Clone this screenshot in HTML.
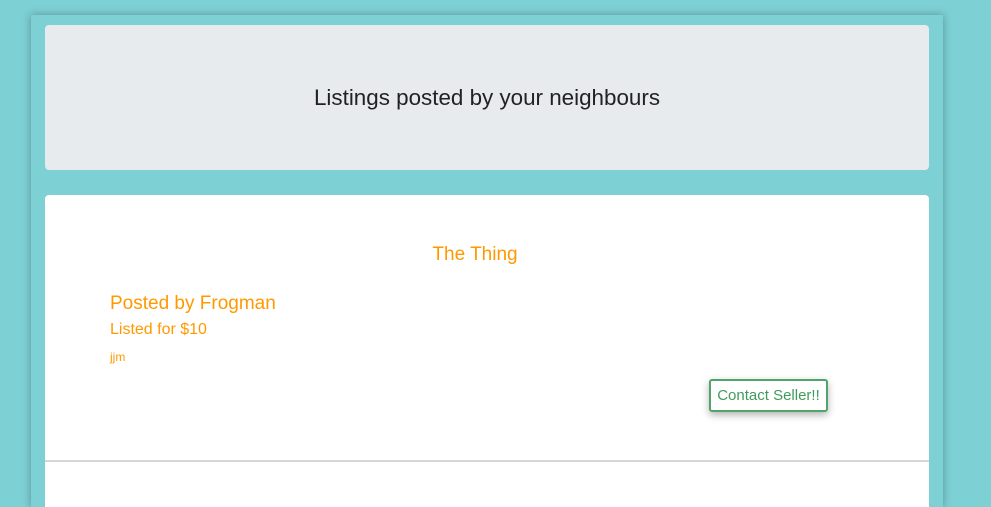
<!DOCTYPE html>
<html><head><style>
html,body{margin:0;width:991px;height:507px;overflow:hidden;}
body{background:#7dd0d4;font-family:"Liberation Sans",Arial,sans-serif;position:relative;}
.outer{position:absolute;left:31px;top:15px;width:912px;height:492px;background:#7dd0d4;box-shadow:0 0 8px rgba(0,0,0,0.3);}
.hdr{position:absolute;left:45px;top:25px;width:884px;height:145px;background:#e7ebee;border-radius:4px;}
.hdr div{position:absolute;left:0;right:0;top:60px;text-align:center;font-size:22.4px;color:#222;white-space:nowrap}
.card{position:absolute;left:45px;top:195px;width:884px;height:265px;background:#fff;border-radius:4px 4px 0 0;border-bottom:2px solid #d6d6d6;}
.card2{position:absolute;left:45px;top:462px;width:884px;height:45px;background:#fff;}
.o{position:absolute;color:#ff9900;white-space:nowrap;}
.btn{position:absolute;left:709px;top:379px;width:115px;height:29px;border:2px solid #4fa56a;border-radius:3px;color:#3f9b5c;font-size:15px;line-height:29px;text-align:center;background:#fff;box-shadow:0 3px 8px rgba(0,0,0,0.3);}
</style></head><body>
<div class="outer"></div>
<div class="hdr"><div>Listings posted by your neighbours</div></div>
<div class="card"></div>
<div class="card2"></div>
<div class="o" style="left:0;width:950px;text-align:center;top:244px;font-size:19px">The Thing</div>
<div class="o" style="left:110px;top:293px;font-size:19px">Posted by Frogman</div>
<div class="o" style="left:110px;top:321px;font-size:16px">Listed for $10</div>
<div class="o" style="left:110px;top:350px;font-size:12px">jjm</div>
<div class="btn">Contact Seller!!</div>
</body></html>
